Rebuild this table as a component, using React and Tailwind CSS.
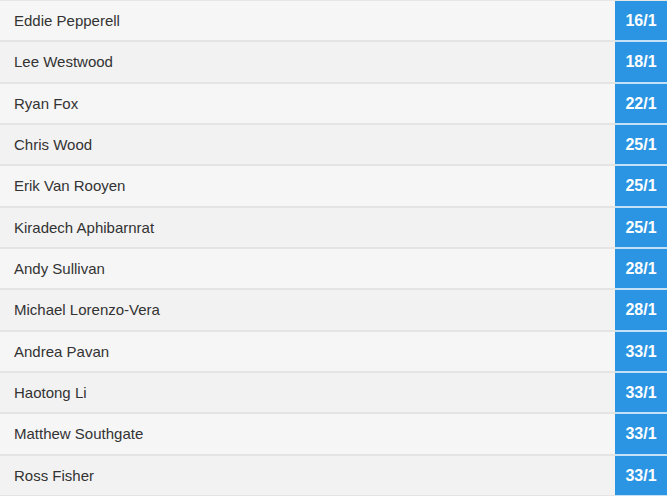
const RUNNERS = [
  ["Eddie Pepperell", "16/1"],
  ["Lee Westwood", "18/1"],
  ["Ryan Fox", "22/1"],
  ["Chris Wood", "25/1"],
  ["Erik Van Rooyen", "25/1"],
  ["Kiradech Aphibarnrat", "25/1"],
  ["Andy Sullivan", "28/1"],
  ["Michael Lorenzo-Vera", "28/1"],
  ["Andrea Pavan", "33/1"],
  ["Haotong Li", "33/1"],
  ["Matthew Southgate", "33/1"],
  ["Ross Fisher", "33/1"],
]

export default function App() {
  return (
    <div className="w-[667px] h-[496px] overflow-hidden bg-[#f4f4f4] font-['Liberation_Sans',Arial,sans-serif]">
      <div className="flex flex-col border-t border-[#e6e6e6]">
        {RUNNERS.map(([name, odds], i) => (
          <div
            key={name}
            className={`flex h-[41.33px] border-b-2 border-[#e4e4e4] ${i % 2 ? "bg-[#f2f2f2]" : "bg-[#f6f6f6]"}`}
          >
            <div className="flex-1 flex items-center pl-[14px] pt-px text-[15px] text-[#333]">{name}</div>
            <div className="w-[52px] -mb-[2px] border-b-2 border-[#c4e0f6] bg-[#2b95e3] flex items-center justify-center pt-px text-[16px] font-bold text-white">
              {odds}
            </div>
          </div>
        ))}
      </div>
    </div>
  )
}
